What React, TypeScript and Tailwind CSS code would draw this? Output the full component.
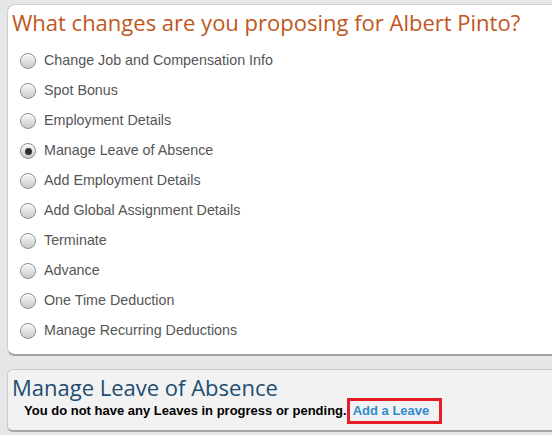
import React from "react";

const options = [
  "Change Job and Compensation Info",
  "Spot Bonus",
  "Employment Details",
  "Manage Leave of Absence",
  "Add Employment Details",
  "Add Global Assignment Details",
  "Terminate",
  "Advance",
  "One Time Deduction",
  "Manage Recurring Deductions",
];

function Radio({ checked }: { checked: boolean }) {
  return (
    <span className="relative flex h-[16px] w-[16px] items-center justify-center rounded-full border border-[#8e8e8e] bg-[linear-gradient(180deg,#f7f7f7_0%,#e2e2e2_50%,#c9c9c9_100%)] shadow-[inset_0_1px_1px_rgba(255,255,255,0.9)]">
      {checked && <span className="h-[7px] w-[7px] rounded-full bg-[#2f2f2f]" />}
    </span>
  );
}

export default function App() {
  return (
    <div className="h-[435px] w-[552px] overflow-hidden bg-[#e4e6e8] pt-1 pl-[7px]">
      <div className="rounded-l-[8px] border border-r-0 border-[#cdcdcd] border-b-[#a3a3a3] border-b-2 bg-white pb-[8px]">
        <h1 className="h-[33px] whitespace-nowrap pl-[4px] pt-[2px] text-[22px] leading-[31px] text-[#c0571c] [font-family:'Open_Sans',sans-serif]">
          What changes are you proposing for Albert Pinto?
        </h1>
        <div className="mt-[8px] flex flex-col">
          {options.map((o, i) => (
            <div key={o} className="flex h-[30px] items-center">
              <span className="ml-[12px] mr-[8px]">
                <Radio checked={i === 3} />
              </span>
              <span className="text-[14.3px] text-[#555] [font-family:'Liberation_Sans',Arial,sans-serif]">
                {o}
              </span>
            </div>
          ))}
        </div>
      </div>
      <div className="mt-[13px] h-[63px] rounded-l-[6px] border border-r-0 border-[#c9c9c9] border-b-[#a8a8a8] border-b-2 bg-[#f2f2f2]">
        <h2 className="h-[28px] whitespace-nowrap pl-[4px] pt-[4px] text-[22px] leading-[26px] text-[#1c4d71] [font-family:'Open_Sans',sans-serif]">
          Manage Leave of Absence
        </h2>
        <div className="flex items-center pl-[16px] text-[13px] font-bold [font-family:'Liberation_Sans',Arial,sans-serif]">
          <span className="text-black">You do not have any Leaves in progress or pending.</span>
          <span className="flex h-[26px] items-center border-[3px] border-[#e41d27] pl-[3px] pr-[10px] text-[#2e8bcc]">
            Add a Leave
          </span>
        </div>
      </div>
    </div>
  );
}
